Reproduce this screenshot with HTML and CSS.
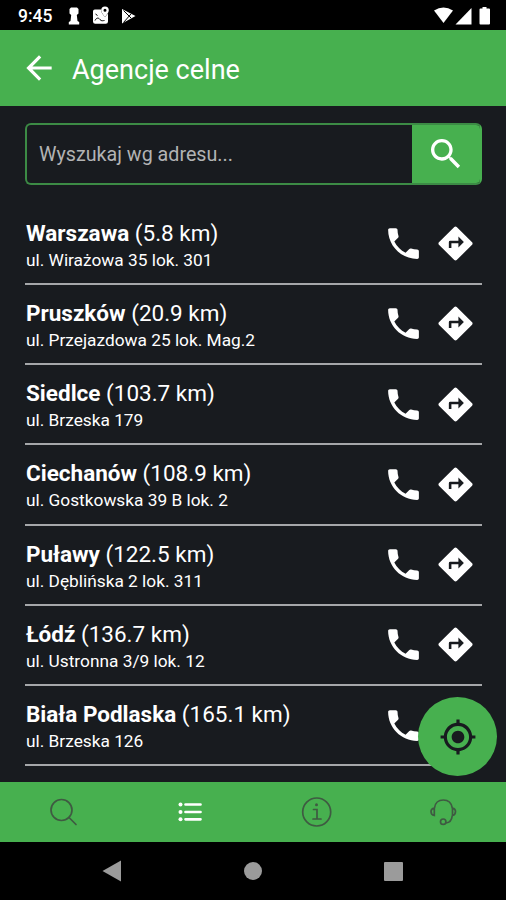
FILE: index.html
```html
<!DOCTYPE html>
<html lang="pl">
<head>
    <meta charset="UTF-8">
    <meta name="viewport" content="width=device-width, initial-scale=1.0">
    <title>Agencje celne</title>
    <link rel="stylesheet" href="styles.css">
</head>
<body>
    <svg class="sprite">
        <symbol id="phone" viewBox="0 0 24 24">
            <path d="M6.62 10.79c1.44 2.83 3.76 5.14 6.59 6.59l2.2-2.2c.27-.27.67-.36 1.02-.24 1.12.37 2.33.57 3.57.57.55 0 1 .45 1 1V20c0 .55-.45 1-1 1-9.39 0-17-7.61-17-17 0-.55.45-1 1-1h3.5c.55 0 1 .45 1 1 0 1.25.2 2.45.57 3.57.11.35.03.74-.25 1.02l-2.2 2.2z"/>
        </symbol>
        <symbol id="directions" viewBox="0 0 24 24">
            <path d="M21.71 11.29l-9-9c-.39-.39-1.02-.39-1.41 0l-9 9c-.39.39-.39 1.02 0 1.41l9 9c.39.39 1.02.39 1.41 0l9-9c.39-.38.39-1.01 0-1.41zM13.700 14.300V11.900H9.600v2.700H8.100v-3.400q0-.8.8-.8h4.800V7.900l3.200 3.200z"/>
        </symbol>
    </svg>
    <div class="screen">
        <div class="status-bar">
            <span class="time">9:45</span>
            <svg class="status-left" viewBox="0 0 70 20">
                <path d="M5 1.500h6l1.500 1.500v4.500L10.800 9l.7 6 1.700 1v2.500H2.800V16l1.700-1 .7-6L3.500 7.500V3z"/>
                <path d="M29.200 3.500h6.300c-.8 3 1.500 5 3.500 7.500l3-3.500v8a2.200 2.200 0 0 1-2.200 2.200H29.200A2.200 2.200 0 0 1 27 15.500V5.500A2 2 0 0 1 29.200 3.500z"/>
                <path d="M39 .5a3.800 3.800 0 0 0-3.800 3.800c0 2.600 3.800 6.600 3.800 6.600s3.800-4 3.800-6.600A3.800 3.800 0 0 0 39 .5zm0 2.300a1.500 1.500 0 1 1 0 3 1.500 1.500 0 0 1 0-3z" fill-rule="evenodd"/>
                <path class="dark-line" d="M29 14.500c1.500-3 3.500-3 5-1s3 1 4.500 1M29.500 8l2 1.500"/>
                <path d="M56 3v14.500L69.500 10z"/>
                <path class="dark-line" d="M57.500 4.500l7.500 7.500M57.500 16.500l7.500-8.500"/>
            </svg>
            <svg class="status-right" viewBox="0 0 58 20">
                <path d="M1 4.500Q10.500-1.500 20 4.500L10.500 17z"/>
                <path d="M38.500 2v16.500H22.500z"/>
                <path d="M49.500 1h4v1.500H56q1 0 1 1v14q0 1-1 1h-8.500q-1 0-1-1v-14q0-1 1-1h2z"/>
            </svg>
        </div>

        <header class="header">
            <svg class="back" viewBox="0 0 24 24"><path d="M20 11H7.830l5.590-5.590L12 4l-8 8 8 8 1.410-1.410L7.830 13H20v-2z"/></svg>
            <h1>Agencje celne</h1>
        </header>

        <main class="content">
            <div class="search">
                <div class="search-input">Wyszukaj wg adresu...</div>
                <div class="search-btn">
                    <svg viewBox="0 0 24 24"><path d="M15.500 14h-.79l-.28-.27C15.410 12.590 16 11.110 16 9.500 16 5.910 13.090 3 9.500 3S3 5.910 3 9.500 5.910 16 9.500 16c1.610 0 3.090-.59 4.230-1.570l.27.28v.79l5 4.990L20.490 19l-4.990-5zm-6 0C7.010 14 5 11.990 5 9.500S7.010 5 9.500 5 14 7.010 14 9.500 11.990 14 9.500 14z"/></svg>
                </div>
            </div>

            <ul class="list">
                <li class="item">
                    <div class="info">
                        <div class="name"><b>Warszawa</b> (5.8 km)</div>
                        <div class="address">ul. Wirażowa 35 lok. 301</div>
                    </div>
                    <svg class="icon"><use href="#phone"/></svg>
                    <svg class="icon"><use href="#directions"/></svg>
                </li>
                <li class="item">
                    <div class="info">
                        <div class="name"><b>Pruszków</b> (20.9 km)</div>
                        <div class="address">ul. Przejazdowa 25 lok. Mag.2</div>
                    </div>
                    <svg class="icon"><use href="#phone"/></svg>
                    <svg class="icon"><use href="#directions"/></svg>
                </li>
                <li class="item">
                    <div class="info">
                        <div class="name"><b>Siedlce</b> (103.7 km)</div>
                        <div class="address">ul. Brzeska 179</div>
                    </div>
                    <svg class="icon"><use href="#phone"/></svg>
                    <svg class="icon"><use href="#directions"/></svg>
                </li>
                <li class="item">
                    <div class="info">
                        <div class="name"><b>Ciechanów</b> (108.9 km)</div>
                        <div class="address">ul. Gostkowska 39 B lok. 2</div>
                    </div>
                    <svg class="icon"><use href="#phone"/></svg>
                    <svg class="icon"><use href="#directions"/></svg>
                </li>
                <li class="item">
                    <div class="info">
                        <div class="name"><b>Puławy</b> (122.5 km)</div>
                        <div class="address">ul. Dęblińska 2 lok. 311</div>
                    </div>
                    <svg class="icon"><use href="#phone"/></svg>
                    <svg class="icon"><use href="#directions"/></svg>
                </li>
                <li class="item">
                    <div class="info">
                        <div class="name"><b>Łódź</b> (136.7 km)</div>
                        <div class="address">ul. Ustronna 3/9 lok. 12</div>
                    </div>
                    <svg class="icon"><use href="#phone"/></svg>
                    <svg class="icon"><use href="#directions"/></svg>
                </li>
                <li class="item">
                    <div class="info">
                        <div class="name"><b>Biała Podlaska</b> (165.1 km)</div>
                        <div class="address">ul. Brzeska 126</div>
                    </div>
                    <svg class="icon"><use href="#phone"/></svg>
                    <svg class="icon"><use href="#directions"/></svg>
                </li>
            </ul>

            <div class="fab">
                <svg viewBox="0 0 24 24"><path d="M12 8c-2.210 0-4 1.790-4 4s1.790 4 4 4 4-1.790 4-4-1.790-4-4-4zm8.940 3c-.46-4.170-3.770-7.480-7.940-7.940V1h-2v2.060C6.830 3.520 3.520 6.830 3.060 11H1v2h2.060c.46 4.170 3.770 7.480 7.940 7.940V23h2v-2.060c4.170-.46 7.480-3.770 7.940-7.940H23v-2h-2.060zM12 19c-3.870 0-7-3.130-7-7s3.130-7 7-7 7 3.130 7 7-3.130 7-7 7z"/></svg>
            </div>
        </main>

        <nav class="tabs">
            <div class="tab">
                <svg viewBox="0 0 32 32"><circle cx="14.500" cy="14" r="10.500"/><path d="M22 21.500l7 7"/></svg>
            </div>
            <div class="tab active">
                <svg viewBox="0 0 32 32"><path d="M11.500 8.500h15M11.500 16h15M11.500 23.300h15"/><g class="dots"><circle cx="6.500" cy="8.500" r="2"/><circle cx="6.500" cy="16" r="2"/><circle cx="6.500" cy="23.300" r="2"/></g></svg>
            </div>
            <div class="tab">
                <svg viewBox="0 0 32 32"><circle cx="16.700" cy="16" r="14"/><path d="M13.500 13.500h3.500v9.500M13 23h8"/><circle class="dot" cx="16.500" cy="8.800" r="1.500"/></svg>
            </div>
            <div class="tab">
                <svg viewBox="0 0 32 32"><path d="M7.500 12C8 7 11.500 4 16.300 4S24.500 7 25.300 12M7.300 12v7.500C5 19 4 17.500 4 15.500s1-3 3.300-3.500zM25.500 12v7.500c2-.5 3-2 3-4s-1-3-3-3.500zM25.300 19.500c-.5 4.500-2.300 7.300-6.300 7.300"/><circle cx="16.200" cy="25.700" r="2.700"/></svg>
            </div>
        </nav>

        <div class="system-nav">
            <svg viewBox="0 0 20 22"><path d="M19 0.500v21L.5 11z"/></svg>
            <span class="home"></span>
            <span class="recent"></span>
        </div>
    </div>
</body>
</html>
```
FILE: styles.css
```css
* {
    box-sizing: border-box;
}
body {
    margin: 0;
    background-color: #000;
    font-family: Roboto, "Liberation Sans", sans-serif;
    color: #fff;
    overflow: hidden;
}
svg {
    display: block;
    flex-shrink: 0;
    fill: #fff;
}
.sprite {
    display: none;
}
.screen {
    width: 506px;
    height: 900px;
    display: flex;
    flex-direction: column;
}

.status-bar {
    height: 30px;
    display: flex;
    align-items: center;
    padding: 1px 15px 0 18px;
    background-color: #000;
}
.time {
    width: 48px;
    font-size: 17.500px;
    font-weight: 500;
    line-height: 30px;
}
.status-left {
    width: 70px;
    height: 20px;
}
.dark-line {
    fill: none;
    stroke: #000;
    stroke-width: 1;
}
.status-right {
    width: 58px;
    height: 20px;
    margin-left: auto;
}

.header {
    height: 76px;
    display: flex;
    align-items: center;
    gap: 14px;
    padding-left: 20px;
    background-color: #47b04f;
}
.back {
    width: 38px;
    height: 38px;
}
.header h1 {
    margin: 3px 0 0;
    font-size: 27px;
    font-weight: 400;
    line-height: 32px;
}

.content {
    position: relative;
    height: 676px;
    padding: 17px 24px 0 25px;
    background-color: #181b1f;
}
.search {
    height: 62px;
    display: flex;
    border: 2px solid #3c8b45;
    border-right-color: #47b04f;
    border-radius: 6px;
    overflow: hidden;
}
.search-input {
    flex: 1;
    padding-left: 12px;
    font-size: 19.700px;
    line-height: 60px;
    color: #b2b3b4;
}
.search-btn {
    width: 70px;
    margin: -2px;
    display: flex;
    align-items: center;
    justify-content: center;
    padding-right: 2px;
    background-color: #47b04f;
}
.search-btn svg {
    width: 40px;
    height: 40px;
}

.list {
    list-style: none;
    margin: 19.500px 0 0;
    padding: 0;
}
.item {
    height: 80.250px;
    display: flex;
    align-items: center;
    gap: 11px;
    padding-right: 6px;
    border-bottom: 2px solid #a5a7a9;
}
.info {
    flex: 1;
    padding: 4px 0 0 1px;
}
.name {
    font-size: 22.500px;
    line-height: 28px;
}
.address {
    font-size: 17.300px;
    line-height: 26px;
}
.icon {
    width: 41px;
    height: 41px;
}

.fab {
    position: absolute;
    right: 9px;
    bottom: 6px;
    width: 79px;
    height: 79px;
    display: flex;
    align-items: center;
    justify-content: center;
    border-radius: 50%;
    background-color: #47b04f;
}
.fab svg {
    width: 38px;
    height: 38px;
    fill: #181b1f;
}

.tabs {
    height: 60px;
    display: flex;
    background-color: #47b04f;
}
.tab {
    flex: 1;
    display: flex;
    align-items: center;
    justify-content: center;
}
.tab svg {
    width: 32px;
    height: 32px;
    fill: none;
    stroke: #3f5a42;
    stroke-width: 1.700;
    stroke-linecap: round;
}
.tab .dot {
    fill: #3f5a42;
    stroke: none;
}
.active svg {
    stroke: #fff;
    stroke-width: 2.700;
}
.tab .dots {
    fill: #fff;
    stroke: none;
}

.system-nav {
    flex: 1;
    display: flex;
    align-items: center;
    justify-content: space-between;
    padding: 0 103px 0 102px;
    background-color: #000;
}
.system-nav svg {
    width: 20px;
    height: 22px;
    fill: #9b9b9b;
}
.home {
    width: 18px;
    height: 18px;
    border-radius: 50%;
    background-color: #9b9b9b;
}
.recent {
    width: 19px;
    height: 19px;
    border-radius: 1px;
    background-color: #9b9b9b;
}
```
